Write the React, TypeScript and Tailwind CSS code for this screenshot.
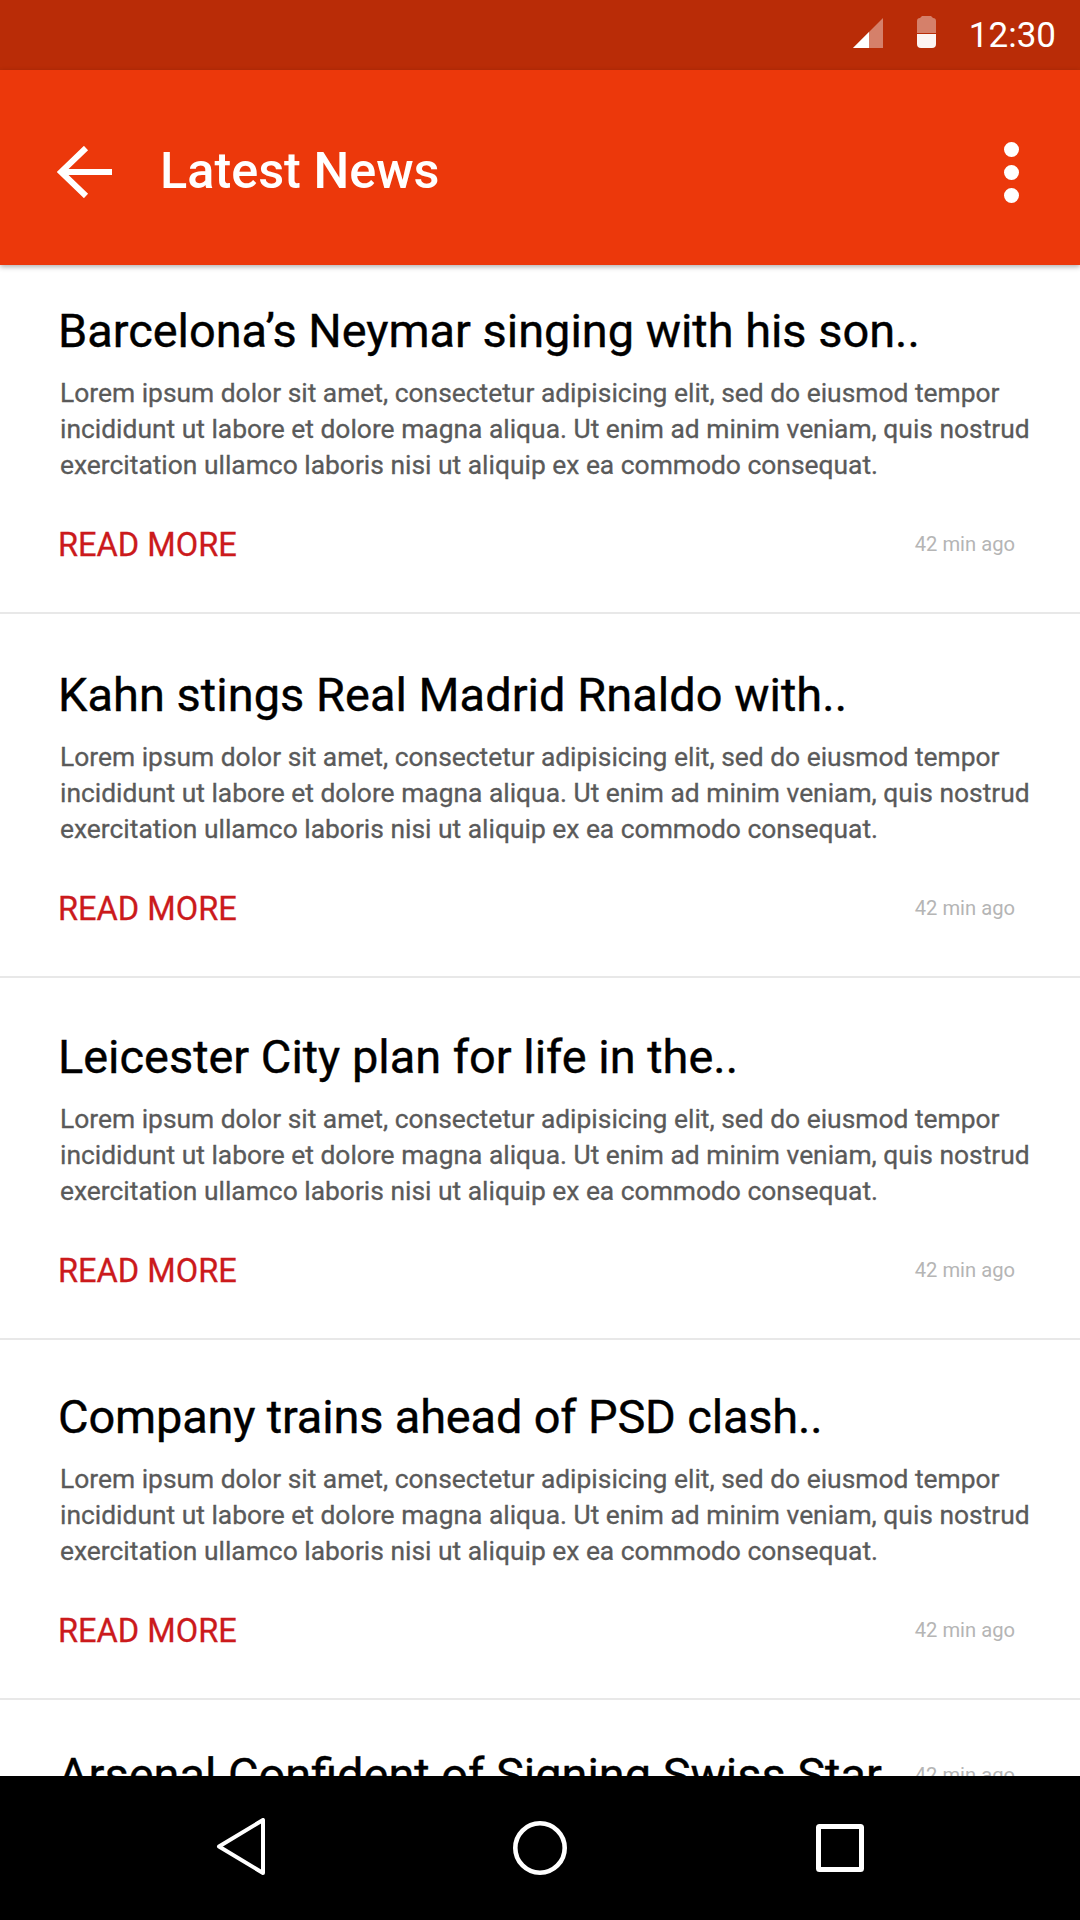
const items = [
  { title: "Barcelona’s Neymar singing with his son..", top: "pt-[39px]", h: "h-[349px]", track: "tracking-normal" },
  { title: "Kahn stings Real Madrid Rnaldo with..", top: "pt-[54px]", h: "h-[364px]", track: "tracking-[0.06px]" },
  { title: "Leicester City plan for life in the..", top: "pt-[52px]", h: "h-[362px]", track: "tracking-normal" },
  { title: "Company trains ahead of PSD clash..", top: "pt-[50px]", h: "h-[360px]", track: "tracking-[-0.14px]" },
];

function Item({ title, top, h, track }: { title: string; top: string; h: string; track: string }) {
  return (
    <article className={`${h} ${top} pl-[58px] pr-[16px] border-b-2 border-[#e8e8e8]`}>
      <h2 className={`${track} text-[46.9px] leading-[54px] font-normal text-black [-webkit-text-stroke:0.4px_#000000]`}>{title}</h2>
      <p className="mt-[17px] ml-[2px] text-[26.4px] leading-[36px] text-[#5a5a5a] whitespace-nowrap [-webkit-text-stroke:0.3px_#5a5a5a]">
        Lorem ipsum dolor sit amet, consectetur adipisicing elit, sed do eiusmod tempor
        <br />
        incididunt ut labore et dolore magna aliqua. Ut enim ad minim veniam, quis nostrud
        <br />
        exercitation ullamco laboris nisi ut aliquip ex ea commodo consequat.
      </p>
      <div className="mt-[42px] flex items-center justify-between pr-[49px]">
        <span className="text-[32.6px] leading-[40px] text-[#cb1a1c] [-webkit-text-stroke:0.3px_#cb1a1c]">READ MORE</span>
        <span className="mb-[2px] text-[20.2px] leading-[24px] text-[#b5b5b5]">42 min ago</span>
      </div>
    </article>
  );
}

export default function App() {
  return (
    <div className="w-[1080px] h-[1920px] flex flex-col bg-white overflow-hidden font-['Roboto',sans-serif]">
      <div className="h-[70px] shrink-0 bg-[#b92c07] flex items-center justify-end pr-[24px] text-white">
        <svg width="30" height="30" viewBox="0 0 30 30" className="mr-[34px] mb-[5px]">
          <path d="M0 30 L30 0 V30 Z" fill="#ffffff" fillOpacity="0.4" />
          <path d="M0 30 L16 14 V30 Z" fill="#ffffff" />
        </svg>
        <svg width="19" height="32" viewBox="0 0 19 32" className="mr-[33px] mb-[6px]">
          <path d="M0 17 V5 Q0 2 3 2 L5 0 H14 L16 2 Q19 2 19 5 V17 Z" fill="#ffffff" fillOpacity="0.4" />
          <path d="M0 18 H19 V28 A4 4 0 0 1 15 32 H4 A4 4 0 0 1 0 28 Z" fill="#ffffff" fillOpacity="0.95" />
        </svg>
        <span className="text-[35px] leading-none">12:30</span>
      </div>
      <header className="relative z-10 h-[195px] shrink-0 bg-[#ec380b] shadow-[0_2px_5px_rgba(0,0,0,0.3)] flex items-center text-white pl-[57px] pr-[61px] pt-[8px]">
        <svg width="56" height="52" viewBox="0 0 56 52" className="shrink-0">
          <path d="M55 26 H4 M29 2 L4 26 L29 50" fill="none" stroke="#ffffff" strokeWidth="6" />
        </svg>
        <h1 className="ml-[47px] text-[50.4px] leading-none font-medium">Latest News</h1>
        <div className="ml-auto mt-[2px] flex flex-col gap-[8px]">
          <span className="block w-[15px] h-[15px] rounded-full bg-white" />
          <span className="block w-[15px] h-[15px] rounded-full bg-white" />
          <span className="block w-[15px] h-[15px] rounded-full bg-white" />
        </div>
      </header>
      <main className="flex-1 overflow-hidden">
        {items.map((it) => (
          <Item key={it.title} {...it} />
        ))}
        <div className="pt-[48px] pl-[58px] pr-[65px] flex items-center justify-between">
          <h2 className="text-[46.9px] leading-[54px] text-black [-webkit-text-stroke:0.4px_#000000]">Arsenal Confident of Signing Swiss Star</h2>
          <span className="text-[20.2px] leading-[24px] text-[#b5b5b5]">42 min ago</span>
        </div>
      </main>
      <nav className="h-[144px] shrink-0 bg-black grid grid-cols-3 items-center justify-items-center px-[90px]">
        <svg width="52" height="60" viewBox="0 0 52 60">
          <path d="M49 2 V55 L5 28.5 Z" fill="none" stroke="#ffffff" strokeWidth="4" strokeLinejoin="round" />
        </svg>
        <svg width="54" height="54" viewBox="0 0 54 54">
          <circle cx="27" cy="27" r="24.7" fill="none" stroke="#ffffff" strokeWidth="4.6" />
        </svg>
        <svg width="48" height="48" viewBox="0 0 48 48">
          <rect x="2.5" y="2.5" width="43" height="43" rx="1" fill="none" stroke="#ffffff" strokeWidth="5" />
        </svg>
      </nav>
    </div>
  );
}
